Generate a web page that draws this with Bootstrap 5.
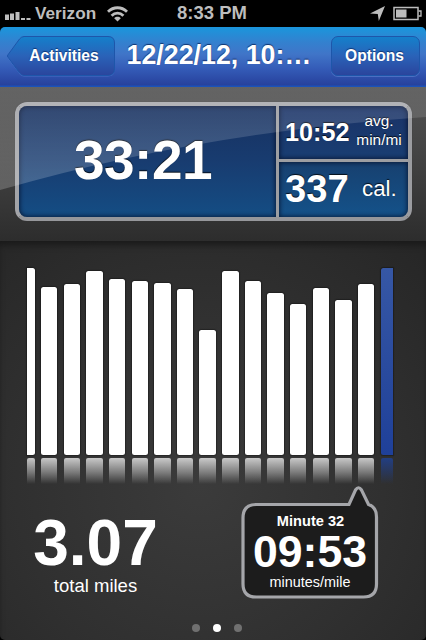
<!DOCTYPE html>
<html lang="en">
<head>
  <meta charset="UTF-8">
  <title>Run details</title>
  <meta name="viewport" content="width=device-width, initial-scale=1">
  <link href="https://cdn.jsdelivr.net/npm/bootstrap@5.3.0/dist/css/bootstrap.min.css" rel="stylesheet">
  <style>
    body {
      background: #000;
      color: #fff;
      font-family: "Liberation Sans", Arial, sans-serif;
      line-height: 1;
      letter-spacing: 0;
    }
    .screen { width: 426px; height: 640px; }

    /* status bar */
    .status-bar {
      height: 27px;
      padding: 0 4px 0 5px;
      color: #bdbdbd;
      font-weight: bold;
    }
    .status-side { flex: 1 1 0; }
    .carrier { font-size: 17.2px; font-weight: bold; margin: 0 11px 0 4px; }
    .clock { font-size: 18.5px; margin: 0 3px 0 0; }

    /* title bar */
    .title-bar {
      height: 60px;
      padding: 0 6px 2px 7px;
      background: linear-gradient(#1a96dc, #3381cf 25%, #4075c8 45%, #345bb7 70%, #27419c 97%, #1c52b8 98%);
      border-radius: 5px 5px 0 0;
    }
    .title-bar h1 {
      width: 194px;
      padding-bottom: 2px;
      font-size: 26.8px;
      font-weight: bold;
      text-shadow: 0 -1px 1px rgba(0, 20, 70, .7);
      white-space: nowrap;
    }
    .bar-btn {
      height: 40px;
      color: #fff;
      font-size: 15.6px;
      font-weight: bold;
      text-shadow: 0 -1px 1px rgba(0, 20, 70, .6);
    }
    .bar-btn:hover { color: #fff; }
    .back-btn { width: 109px; padding: 0 0 0 5px; }
    .options-btn {
      width: 89px;
      padding: 0 2px 0 0;
      border: 1px solid #1e56aa;
      border-radius: 7px;
      background: linear-gradient(#1480cb, #2a62b8 50%, #2a459d);
      box-shadow: 0 1px 0 rgba(120, 160, 230, .4);
    }

    /* time, pace and calories */
    .summary {
      height: 154px;
      padding: 15px 14px 20px 15px;
      background: linear-gradient(#525252, #434343 45%, #2d2d2d);
    }
    .lcd {
      border: 4px solid;
      border-color: #a8a9ad #9b9ca0 #96979b #a3a4a8;
      border-radius: 12px;
      background: #9d9ea2;
      gap: 3px;
      box-shadow: 0 0 1px #333;
    }
    .lcd-cell {
      background: linear-gradient(#17305f, #183c70 50%, #144d84);
      box-shadow: inset 0 0 4px 1px rgba(5, 15, 40, .75);
      text-shadow: 0 -1px 1px rgba(0, 0, 0, .8);
    }
    .lcd-time {
      width: 257px;
      padding: 0 9px 3px 0;
      border-radius: 8px 0 0 8px;
      font-size: 55px;
      letter-spacing: -.5px;
    }
    .lcd-side { gap: 3px; }
    .lcd-pace {
      height: 53px;
      border-radius: 0 8px 0 0;
      background: linear-gradient(#1a3266, #193e73);
      padding-left: 6px;
    }
    .lcd-cal {
      border-radius: 0 0 8px 0;
      background: linear-gradient(#17406f, #14528a);
      padding-left: 6px;
    }
    .pace-value { font-size: 25.2px; width: 69px; }
    .pace-unit { font-size: 15.4px; line-height: 19.3px; width: 50px; padding-bottom: 5px; }
    .cal-value { font-size: 38.2px; width: 77px; }
    .cal-unit { font-size: 22.3px; }

    /* chart and totals */
    .details {
      height: 399px;
      background: radial-gradient(circle at 200px 245px, #3b3b3b, #303030 55%, #262626 100%);
      box-shadow: inset 0 6px 6px -2px #1a1a1a;
      border-radius: 0 0 5px 5px;
    }
    .chart {
      height: 245px;
      padding: 26px 0 0 26.5px;
      gap: 6.15px;
    }
    .minute { width: 16.5px; }
    .minute.first { width: 8.3px; }
    .minute.current { width: 12.5px; }
    .minute-track { height: 188px; }
    .minute-bar {
      background: #fff;
      border-radius: 2.5px;
      box-shadow: 0 0 1px 1px rgba(0, 0, 0, .3);
    }
    .minute-mirror {
      height: 26px;
      margin-top: 3px;
      background: linear-gradient(rgba(255, 255, 255, .73), rgba(255, 255, 255, .35) 55%, rgba(255, 255, 255, 0));
      border-radius: 2px 2px 0 0;
    }
    .first .minute-bar { border-radius: 0 2.5px 2.5px 0; }
    .current .minute-bar {
      border-radius: 2.5px 0 0 2.5px;
      background: linear-gradient(#3657a5, #1f4099);
    }
    .current .minute-mirror {
      background: linear-gradient(rgba(32, 65, 145, .85), rgba(32, 65, 145, .4) 55%, rgba(32, 65, 145, 0));
    }
    .totals { height: 114px; }
    .miles { width: 191px; padding-top: 23px; }
    .miles-value { font-size: 64px; line-height: 68px; }
    .miles-unit { font-size: 18.5px; }
    .bubble { width: 138px; height: 114px; margin-left: 50px; padding-top: 28px; }
    .bubble-title { font-size: 14.6px; padding-left: 1px; }
    .bubble-value { font-size: 44.6px; line-height: 46px; }
    .bubble-unit { font-size: 14.4px; }
    .pager { gap: 13.3px; padding: 24px 0 0 8px; }
    .dot { width: 8px; height: 8px; background: #707070; }
    .dot.on { background: #fff; }
  </style>
</head>
<body>
  <div class="screen d-flex flex-column overflow-hidden">

    <div class="status-bar d-flex align-items-center">
      <div class="status-side d-flex align-items-center">
        <svg width="26" height="18" viewBox="0 0 26 18" fill="#bdbdbd">
          <rect x="0" y="9.5" width="4" height="5.5"/>
          <rect x="5" y="8.5" width="4" height="6.5"/>
          <rect x="10.500" y="7" width="4" height="8"/>
          <rect x="16" y="13" width="4" height="2"/>
          <rect x="21.500" y="13" width="4" height="2"/>
        </svg>
        <span class="carrier">Verizon</span>
        <svg width="21" height="16" viewBox="0 0 21 16" fill="none" stroke="#bdbdbd" stroke-width="2.8">
          <path d="M1 5.800C6.500 .4 14.500 .4 20 5.800"/>
          <path d="M4.600 9.800C8 6.300 13 6.300 16.400 9.800"/>
          <path d="M7.200 12.200C9 10.400 12 10.400 13.800 12.200L10.500 15.500Z" fill="#bdbdbd" stroke="none"/>
        </svg>
      </div>
      <span class="clock">8:33 PM</span>
      <div class="status-side d-flex align-items-center justify-content-end">
        <svg width="15" height="15" viewBox="0 0 15 15" fill="#bdbdbd">
          <path d="M15 0L8.800 15L7.800 8L0 7.400Z"/>
        </svg>
        <svg class="ms-2" width="29" height="15" viewBox="0 0 29 15">
          <rect x="1" y="1.500" width="24" height="12" fill="none" stroke="#bdbdbd" stroke-width="1.500"/>
          <rect x="3" y="3.500" width="10.500" height="8" fill="#bdbdbd"/>
          <path d="M25.500 5H28V10H25.500" fill="none" stroke="#bdbdbd" stroke-width="1.300"/>
        </svg>
      </div>
    </div>

    <nav class="title-bar d-flex align-items-center justify-content-between">
      <button type="button" class="btn bar-btn back-btn border-0 position-relative">
        <svg class="position-absolute top-0 start-0" width="109" height="41" viewBox="0 0 109 41">
          <defs>
            <linearGradient id="backFill" x1="0" y1="0" x2="0" y2="1">
              <stop offset="0" stop-color="#1480cb"/>
              <stop offset=".5" stop-color="#2a62b8"/>
              <stop offset="1" stop-color="#2a459d"/>
            </linearGradient>
          </defs>
          <path d="M17 1.500H101Q107.500 1.500 107.500 8V34Q107.500 40.500 101 40.500H17Q14.500 40.500 12.500 38L.8 22Q0 21 .8 20L12.500 4Q14.500 1.500 17 1.500Z" fill="#628be0" opacity=".5"/>
          <path d="M17 .5H101Q107.500 .5 107.500 7V33Q107.500 39.500 101 39.500H17Q14.500 39.500 12.500 37L.8 21Q0 20 .8 19L12.500 3Q14.500 .5 17 .5Z" fill="url(#backFill)" stroke="#1e56aa"/>
        </svg>
        <span class="position-relative">Activities</span>
      </button>
      <h1 class="mb-0">12/22/12, 10:…</h1>
      <button type="button" class="btn bar-btn options-btn">Options</button>
    </nav>

    <section class="summary position-relative">
      <div class="lcd d-flex h-100 fw-bold">
        <div class="lcd-cell lcd-time d-flex align-items-center justify-content-center"><span>33:21</span></div>
        <div class="lcd-side d-flex flex-column flex-fill">
          <div class="lcd-cell lcd-pace d-flex align-items-center">
            <span class="pace-value">10:52</span>
            <span class="pace-unit fw-normal text-center">avg.<br>min/mi</span>
          </div>
          <div class="lcd-cell lcd-cal d-flex align-items-center flex-fill">
            <span class="cal-value">337</span>
            <span class="cal-unit fw-normal">cal.</span>
          </div>
        </div>
      </div>
      <!-- glass shine across the whole panel -->
      <svg class="position-absolute top-0 start-0" width="426" height="154" viewBox="0 0 426 154">
        <defs>
          <linearGradient id="shine" x1="0" y1="0" x2="0" y2="1">
            <stop offset="0" stop-color="#fff" stop-opacity=".1"/>
            <stop offset="1" stop-color="#fff" stop-opacity=".2"/>
          </linearGradient>
        </defs>
        <path d="M0 0H426V30Q200 45 0 103Z" fill="url(#shine)"/>
      </svg>
    </section>

    <section class="details d-flex flex-column">
      <div class="chart d-flex" id="chart"></div>

      <div class="totals d-flex">
        <div class="miles text-center">
          <div class="miles-value fw-bold">3.07</div>
          <div class="miles-unit">total miles</div>
        </div>
        <div class="bubble text-center position-relative">
          <svg class="position-absolute top-0 start-0" width="138" height="116" viewBox="0 0 138 116">
            <path d="M15 18.500H108L114.500 4Q117.500 -.5 120.500 4L127.500 18.500Q135.500 21 135.500 31V98Q135.500 111 122.500 111H15Q2 111 2 98V32Q2 18.500 15 18.500Z" fill="#1c1c1c" stroke="#a5a6aa" stroke-width="3.200"/>
          </svg>
          <div class="position-relative">
            <div class="bubble-title fw-bold">Minute 32</div>
            <div class="bubble-value fw-bold">09:53</div>
            <div class="bubble-unit">minutes/mile</div>
          </div>
        </div>
      </div>

      <div class="pager d-flex justify-content-center">
        <span class="dot rounded-circle"></span>
        <span class="dot on rounded-circle"></span>
        <span class="dot rounded-circle"></span>
      </div>
    </section>
  </div>

  <script src="https://cdn.jsdelivr.net/npm/bootstrap@5.3.0/dist/js/bootstrap.bundle.min.js"></script>
  <script>
    // bar height in px for every minute in view, the last one is selected
    const minutes = [187.5, 168.5, 171, 184, 176, 174, 172, 166, 125, 184, 174, 162, 151.5, 167, 155.5, 171, 187.5];
    const chart = document.getElementById("chart");

    minutes.forEach(function (height, i) {
      const col = document.createElement("div");
      col.className = "minute flex-shrink-0";
      if (i === 0) col.classList.add("first");
      if (i === minutes.length - 1) col.classList.add("current");
      col.innerHTML =
        '<div class="minute-track d-flex align-items-end">' +
        '<div class="minute-bar w-100" style="height: ' + height + 'px"></div></div>' +
        '<div class="minute-mirror"></div>';
      chart.appendChild(col);
    });
  </script>
</body>
</html>
